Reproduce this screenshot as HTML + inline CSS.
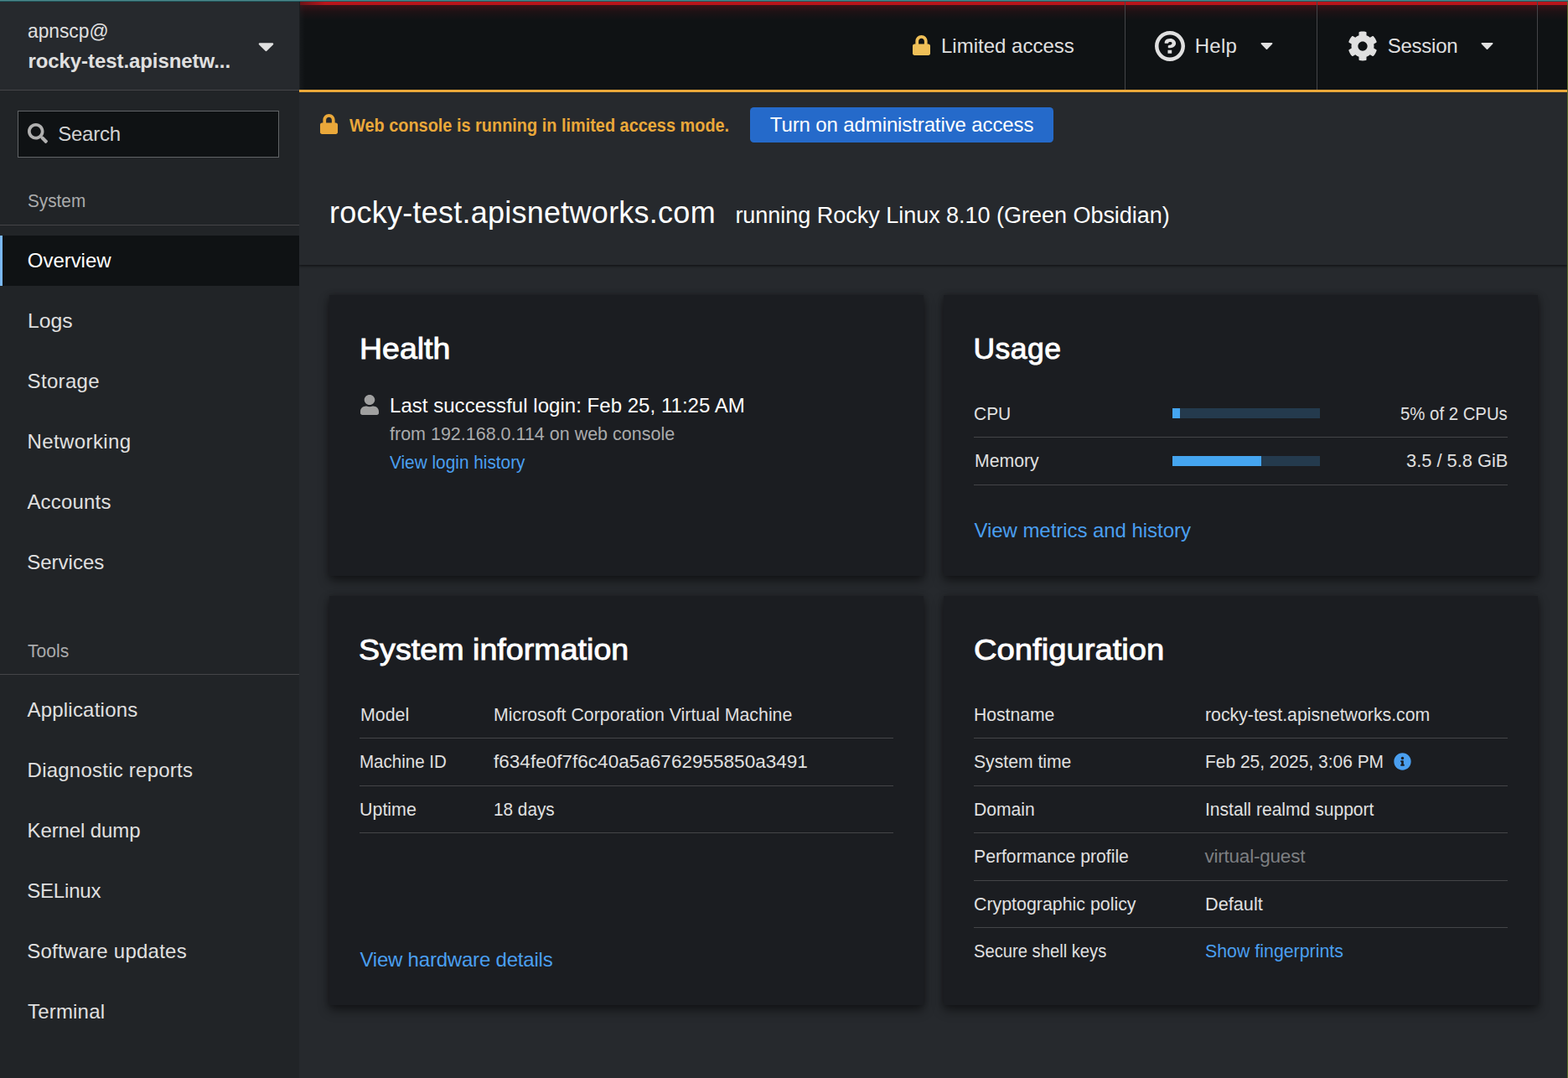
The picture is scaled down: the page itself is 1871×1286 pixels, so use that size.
<!DOCTYPE html>
<html lang="en">
<head>
<meta charset="utf-8">
<title>Overview - apnscp@rocky-test.apisnetworks.com</title>
<style>
*{box-sizing:border-box}
html,body{margin:0;padding:0}
body{width:1871px;height:1286px;overflow:hidden;background:#26292d;font-family:"Liberation Sans",Arial,sans-serif;position:relative;-webkit-font-smoothing:antialiased}
.t{position:absolute;transform-origin:0 0;white-space:pre;margin:0;padding:0;font-weight:400;text-decoration:none;display:block}
.b,.ic{position:absolute;display:block}
ul{list-style:none;margin:0;padding:0}
h1,h2,h3,p{margin:0}
.card{position:absolute;background:#1b1d21;box-shadow:0 6px 12px 0 rgba(3,3,3,.48),0 0 6px 0 rgba(3,3,3,.24)}
.btn{border:0;padding:0;margin:0;background:#256aca;border-radius:4.5px;font:inherit;text-align:left;overflow:visible;cursor:pointer}
.hr{position:absolute;height:1px;background:#444548}
</style>
</head>
<body>
<main>
<div class="b" style="left:357px;top:110px;width:1513px;height:206px;background:#26292d;box-shadow:0 1.5px 3px 0 rgba(3,3,3,.48),0 0 3px 0 rgba(3,3,3,.24);"></div>
<svg class="ic" style="left:382px;top:136px" width="21" height="24" viewBox="0 0 448 512" preserveAspectRatio="none" fill="#eaa83a" aria-hidden="true"><path d="M400 224h-24v-72C376 68.2 307.8 0 224 0S72 68.2 72 152v72H48c-26.5 0-48 21.5-48 48v192c0 26.5 21.5 48 48 48h352c26.5 0 48-21.5 48-48V272c0-26.5-21.5-48-48-48zm-104 0H152v-72c0-39.7 32.3-72 72-72s72 32.3 72 72v72z"/></svg>
<strong class="t" style="left:417.4px;top:138px;font-size:22.5px;line-height:23px;color:#eaa83a;transform:scaleX(0.8847);font-weight:700;">Web console is running in limited access mode.</strong>
<button type="button" class="b btn" style="left:895px;top:128px;width:362px;height:42px"><span class="t" style="left:23.8px;top:9px;font-size:24px;line-height:24px;color:#ffffff;letter-spacing:-0.118px;">Turn on administrative access</span></button>
<h1 class="t" style="left:393.0px;top:236px;font-size:36px;line-height:36px;color:#ffffff;letter-spacing:0.25px;">rocky-test.apisnetworks.com</h1>
<span class="t" style="left:877.4px;top:244px;font-size:27px;line-height:27px;color:#ffffff;letter-spacing:-0.022px;">running Rocky Linux 8.10 (Green Obsidian)</span>
<article class="card" style="left:393px;top:352px;width:709px;height:335px">
</article>
<h2 class="t" style="left:428.89px;top:398px;font-size:35.5px;line-height:36px;color:#ffffff;transform:scaleX(1.0556);-webkit-text-stroke:0.9px #ffffff;">Health</h2>
<svg class="ic" style="left:430px;top:471px" width="22" height="24" viewBox="0 0 448 512" preserveAspectRatio="none" fill="#a0a0a0" aria-hidden="true"><path d="M224 256c70.700 0 128-57.300 128-128S294.700 0 224 0 96 57.300 96 128s57.300 128 128 128zm89.600 32h-16.700c-22.200 10.200-46.900 16-72.900 16s-50.600-5.800-72.900-16h-16.700C60.200 288 0 348.200 0 422.400V464c0 26.500 21.500 48 48 48h352c26.500 0 48-21.500 48-48v-41.600c0-74.200-60.200-134.400-134.400-134.400z"/></svg>
<span class="t" style="left:465.0px;top:472px;font-size:24px;line-height:24px;color:#ffffff;letter-spacing:0.034px;">Last successful login: Feb 25, 11:25 AM</span>
<span class="t" style="left:465.4px;top:506px;font-size:22.5px;line-height:23px;color:#aaabac;transform:scaleX(0.9552);">from 192.168.0.114 on web console</span>
<a class="t" style="left:465.4px;top:540px;font-size:22.5px;line-height:23px;color:#4a9ff0;transform:scaleX(0.9246);">View login history</a>
<article class="card" style="left:1126px;top:352px;width:709px;height:335px"></article>
<h2 class="t" style="left:1161.4px;top:398px;font-size:35.5px;line-height:36px;color:#ffffff;letter-spacing:0.525px;-webkit-text-stroke:0.9px #ffffff;">Usage</h2>
<span class="t" style="left:1162.27px;top:482px;font-size:22.5px;line-height:23px;color:#e0e0e0;transform:scaleX(0.9311);">CPU</span>
<div class="b" style="left:1399px;top:487px;width:176px;height:12px;background:#243a4d;"><div class="b" style="left:0px;top:0px;width:9px;height:12px;background:#45a5f0;"></div></div>
<span class="t" style="left:1670.6px;top:482px;font-size:22.5px;line-height:23px;color:#e0e0e0;transform:scaleX(0.9043);">5% of 2 CPUs</span>
<div class="hr" style="left:1162px;top:521px;width:637px"></div>
<span class="t" style="left:1162.71px;top:538px;font-size:22.5px;line-height:23px;color:#e0e0e0;transform:scaleX(0.943);">Memory</span>
<div class="b" style="left:1399px;top:544px;width:176px;height:12px;background:#243a4d;"><div class="b" style="left:0px;top:0px;width:106px;height:12px;background:#45a5f0;"></div></div>
<span class="t" style="left:1677.83px;top:538px;font-size:22.5px;line-height:23px;color:#e0e0e0;transform:scaleX(0.9699);">3.5 / 5.8 GiB</span>
<div class="hr" style="left:1162px;top:578px;width:637px"></div>
<a class="t" style="left:1162.4px;top:621px;font-size:24px;line-height:24px;color:#4a9ff0;letter-spacing:-0.048px;">View metrics and history</a>
<article class="card" style="left:393px;top:711px;width:709px;height:488px"></article>
<h2 class="t" style="left:428.14px;top:757px;font-size:35.5px;line-height:36px;color:#ffffff;transform:scaleX(1.0608);-webkit-text-stroke:0.9px #ffffff;">System information</h2>
<span class="t" style="left:429.7px;top:841px;font-size:22.5px;line-height:23px;color:#e0e0e0;transform:scaleX(0.95);">Model</span>
<span class="t" style="left:589.1px;top:841px;font-size:22.5px;line-height:23px;color:#e0e0e0;transform:scaleX(0.9477);">Microsoft Corporation Virtual Machine</span>
<div class="hr" style="left:429px;top:880px;width:637px"></div>
<span class="t" style="left:429.37px;top:897px;font-size:22.5px;line-height:23px;color:#e0e0e0;transform:scaleX(0.9126);">Machine ID</span>
<span class="t" style="left:589.0px;top:897px;font-size:22.5px;line-height:23px;color:#e0e0e0;letter-spacing:0.023px;">f634fe0f7f6c40a5a6762955850a3491</span>
<div class="hr" style="left:429px;top:937px;width:637px"></div>
<span class="t" style="left:429.3px;top:954px;font-size:22.5px;line-height:23px;color:#e0e0e0;transform:scaleX(0.9522);">Uptime</span>
<span class="t" style="left:588.96px;top:954px;font-size:22.5px;line-height:23px;color:#e0e0e0;transform:scaleX(0.9224);">18 days</span>
<div class="hr" style="left:429px;top:993px;width:637px"></div>
<a class="t" style="left:429.4px;top:1133px;font-size:24px;line-height:24px;color:#4a9ff0;letter-spacing:-0.205px;">View hardware details</a>
<article class="card" style="left:1126px;top:711px;width:709px;height:488px"></article>
<h2 class="t" style="left:1161.52px;top:757px;font-size:35.5px;line-height:36px;color:#ffffff;transform:scaleX(1.0761);-webkit-text-stroke:0.9px #ffffff;">Configuration</h2>
<span class="t" style="left:1162.32px;top:841px;font-size:22.5px;line-height:23px;color:#e0e0e0;transform:scaleX(0.939);">Hostname</span>
<span class="t" style="left:1438.05px;top:841px;font-size:22.5px;line-height:23px;color:#e0e0e0;transform:scaleX(0.945);">rocky-test.apisnetworks.com</span>
<div class="hr" style="left:1162px;top:880px;width:637px"></div>
<span class="t" style="left:1161.86px;top:897px;font-size:22.5px;line-height:23px;color:#e0e0e0;transform:scaleX(0.9402);">System time</span>
<span class="t" style="left:1437.84px;top:897px;font-size:22.5px;line-height:23px;color:#e0e0e0;transform:scaleX(0.9307);">Feb 25, 2025, 3:06 PM</span>
<div class="hr" style="left:1162px;top:937px;width:637px"></div>
<span class="t" style="left:1162.33px;top:954px;font-size:22.5px;line-height:23px;color:#e0e0e0;transform:scaleX(0.9365);">Domain</span>
<span class="t" style="left:1437.63px;top:954px;font-size:22.5px;line-height:23px;color:#e0e0e0;transform:scaleX(0.9366);">Install realmd support</span>
<div class="hr" style="left:1162px;top:993px;width:637px"></div>
<span class="t" style="left:1162.32px;top:1010px;font-size:22.5px;line-height:23px;color:#e0e0e0;transform:scaleX(0.9418);">Performance profile</span>
<span class="t" style="left:1437.4px;top:1010px;font-size:22.5px;line-height:23px;color:#7d7f82;letter-spacing:-0.208px;">virtual-guest</span>
<div class="hr" style="left:1162px;top:1050px;width:637px"></div>
<span class="t" style="left:1161.85px;top:1067px;font-size:22.5px;line-height:23px;color:#e0e0e0;transform:scaleX(0.9493);">Cryptographic policy</span>
<span class="t" style="left:1438.27px;top:1067px;font-size:22.5px;line-height:23px;color:#e0e0e0;transform:scaleX(0.9652);">Default</span>
<div class="hr" style="left:1162px;top:1106px;width:637px"></div>
<span class="t" style="left:1161.9px;top:1123px;font-size:22.5px;line-height:23px;color:#e0e0e0;transform:scaleX(0.8977);">Secure shell keys</span>
<a class="t" style="left:1437.85px;top:1123px;font-size:22.5px;line-height:23px;color:#4a9ff0;transform:scaleX(0.9488);">Show fingerprints</a>
<svg class="ic" style="left:1663px;top:898px" width="21" height="21" viewBox="0 0 512 512" preserveAspectRatio="xMidYMid meet" fill="#4a9ff0" aria-hidden="true"><path d="M256 8C119.043 8 8 119.083 8 256c0 136.997 111.043 248 248 248s248-111.003 248-248C504 119.083 392.957 8 256 8zm0 110c23.196 0 42 18.804 42 42s-18.804 42-42 42-42-18.804-42-42 18.804-42 42-42zm56 254c0 6.627-5.373 12-12 12h-88c-6.627 0-12-5.373-12-12v-24c0-6.627 5.373-12 12-12h12v-64h-12c-6.627 0-12-5.373-12-12v-24c0-6.627 5.373-12 12-12h64c6.627 0 12 5.373 12 12v100h12c6.627 0 12 5.373 12 12v24z"/></svg>
</main>
<header>
<div class="b" style="left:357px;top:2px;width:1513px;height:105px;background:#0f1214;background-image:linear-gradient(to bottom,#b8151b 0,#b8151b 4px,#3a1318 4px,#1d1215 12px,#0f1214 22px);"></div>
<div class="b" style="left:357px;top:107px;width:1513px;height:3px;background:#eaa83a;"></div>
<div class="b" style="left:358px;top:2px;width:30px;height:4px;background:transparent;background-image:linear-gradient(to right,rgba(15,18,20,.45),rgba(15,18,20,0));"></div>
<div class="b" style="left:357px;top:2px;width:1px;height:105px;background:#1b1e21;"></div>
<div class="b" style="left:358px;top:6px;width:6px;height:101px;background:transparent;background-image:linear-gradient(to right,rgba(38,41,45,.28),rgba(38,41,45,0));"></div>
<div class="b" style="left:1342px;top:2px;width:1px;height:105px;background:#444548;"></div>
<div class="b" style="left:1571px;top:2px;width:1px;height:105px;background:#444548;"></div>
<div class="b" style="left:1834px;top:2px;width:1px;height:105px;background:#444548;"></div>
<svg class="ic" style="left:1088.5px;top:42px" width="21" height="24" viewBox="0 0 448 512" preserveAspectRatio="none" fill="#f0c058" aria-hidden="true"><path d="M400 224h-24v-72C376 68.2 307.8 0 224 0S72 68.2 72 152v72H48c-26.5 0-48 21.5-48 48v192c0 26.5 21.5 48 48 48h352c26.5 0 48-21.5 48-48V272c0-26.5-21.5-48-48-48zm-104 0H152v-72c0-39.7 32.3-72 72-72s72 32.3 72 72v72z"/></svg>
<span class="t" style="left:1123.0px;top:43px;font-size:24px;line-height:24px;color:#e0e0e0;">Limited access</span>
<svg class="ic" style="left:1378px;top:37px" width="36" height="36" viewBox="0 0 1024 1024" preserveAspectRatio="xMidYMid meet" fill="#e0e0e0" aria-hidden="true"><path d="M521.3,576 C627.5,576 713.7,502 713.7,413.7 C713.7,325.4 627.6,253.6 521.3,253.6 C366,253.6 334.5,337.7 329.2,407.2 C329.2,414.3 335.2,416 343.5,416 L445,416 C450.5,416 458,415.5 460.8,406.5 C460.8,362.6 582.9,357.1 582.9,413.6 C582.9,441.9 556.2,470.9 521.3,473 C486.4,475.1 447.3,479.8 447.3,521.7 L447.3,553.8 C447.3,570.8 456.1,576 472,576 C487.9,576 521.3,576 521.3,576 M575.3,751.3 L575.3,655.3 C575.3,651.7 574,649.9 570.3,649.9 L444.3,649.9 C440.7,649.9 439.8,652.1 439.8,655.3 L439.8,751.3 C439.8,756.3 441.9,758.1 444.3,758.1 L570.3,758.1 C573.7,758.1 575.3,755.2 575.3,751.3 M512,896 C300.2,896 128,723.9 128,512 C128,300.3 300.2,128 512,128 C723.8,128 896,300.2 896,512 C896,723.8 723.7,896 512,896 M512.1,0 C229.7,0 0,229.8 0,512 C0,794.2 229.8,1024 512.1,1024 C794.4,1024 1024,794.3 1024,512 C1024,229.7 794.4,0 512.1,0"/></svg>
<span class="t" style="left:1425.8px;top:43px;font-size:24px;line-height:24px;color:#e0e0e0;letter-spacing:0.2px;">Help</span>
<svg class="ic" style="left:1504px;top:42px" width="15" height="24" viewBox="0 0 320 512" preserveAspectRatio="none" fill="#e0e0e0" aria-hidden="true"><path d="M31.3 192h257.3c17.8 0 26.7 21.5 14.1 34.100L174.100 354.800c-7.800 7.800-20.500 7.800-28.300 0L17.200 226.100C4.600 213.500 13.500 192 31.300 192z"/></svg>
<svg class="ic" style="left:1608px;top:37px" width="36" height="36" viewBox="0 0 512 512" preserveAspectRatio="xMidYMid meet" fill="#e0e0e0" aria-hidden="true"><path d="M487.4 315.7l-42.600-24.600c4.300-23.200 4.300-47 0-70.200l42.600-24.600c4.900-2.800 7.100-8.600 5.500-14-11.100-35.600-30-67.800-54.700-94.600-3.800-4.100-10-5.100-14.800-2.300L380.800 110c-17.900-15.400-38.500-27.300-60.800-35.100V25.800c0-5.600-3.900-10.500-9.400-11.700-36.700-8.200-74.300-7.800-109.200 0-5.500 1.200-9.400 6.100-9.400 11.700V75c-22.200 7.900-42.800 19.800-60.800 35.100L88.700 85.500c-4.900-2.800-11-1.900-14.800 2.300-24.700 26.700-43.600 58.900-54.700 94.600-1.700 5.400.6 11.200 5.500 14L67.300 221c-4.300 23.200-4.300 47 0 70.200l-42.600 24.600c-4.900 2.800-7.100 8.600-5.500 14 11.100 35.600 30 67.800 54.700 94.600 3.800 4.100 10 5.100 14.800 2.300l42.600-24.600c17.900 15.400 38.500 27.300 60.800 35.100v49.200c0 5.600 3.900 10.500 9.400 11.700 36.700 8.200 74.300 7.800 109.200 0 5.500-1.200 9.400-6.100 9.400-11.700v-49.200c22.200-7.900 42.800-19.800 60.800-35.100l42.600 24.600c4.900 2.800 11 1.900 14.800-2.300 24.700-26.700 43.600-58.900 54.700-94.600 1.500-5.500-.7-11.300-5.600-14.100zM256 336c-44.100 0-80-35.900-80-80s35.900-80 80-80 80 35.900 80 80-35.900 80-80 80z"/></svg>
<span class="t" style="left:1655.7px;top:43px;font-size:24px;line-height:24px;color:#e0e0e0;letter-spacing:-0.25px;">Session</span>
<svg class="ic" style="left:1767px;top:42px" width="15" height="24" viewBox="0 0 320 512" preserveAspectRatio="none" fill="#e0e0e0" aria-hidden="true"><path d="M31.3 192h257.3c17.8 0 26.7 21.5 14.1 34.100L174.100 354.800c-7.800 7.800-20.500 7.800-28.300 0L17.200 226.100C4.600 213.500 13.500 192 31.300 192z"/></svg>
</header>
<nav>
<div class="b" style="left:0px;top:2px;width:357px;height:1284px;background:#212427;"></div>
<div class="b" style="left:0px;top:2px;width:357px;height:105px;background:#26292d;"></div>
<span class="t" style="left:32.65px;top:25px;font-size:24px;line-height:24px;color:#e0e0e0;transform:scaleX(0.9485);">apnscp@</span>
<span class="t" style="left:33.4px;top:61px;font-size:24px;line-height:24px;color:#e0e0e0;letter-spacing:-0.071px;font-weight:700;">rocky-test.apisnetw...</span>
<svg class="ic" style="left:308px;top:39.5px" width="19" height="30" viewBox="0 0 320 512" preserveAspectRatio="none" fill="#e0e0e0" aria-hidden="true"><path d="M31.3 192h257.3c17.8 0 26.7 21.5 14.1 34.100L174.100 354.800c-7.800 7.800-20.500 7.800-28.300 0L17.200 226.100C4.600 213.500 13.500 192 31.300 192z"/></svg>
<div class="b" style="left:0px;top:107px;width:357px;height:1px;background:#444548;"></div>
<div class="b" style="left:21px;top:132px;width:312px;height:56px;background:#0f1214;border:1px solid #616467;"></div>
<svg class="ic" style="left:33px;top:147px" width="24" height="24" viewBox="0 0 512 512" preserveAspectRatio="xMidYMid meet" fill="#b0b0b0" aria-hidden="true"><path d="M505 442.7L405.3 343c-4.500-4.500-10.600-7-17-7H372c27.600-35.300 44-79.700 44-128C416 93.100 322.900 0 208 0S0 93.100 0 208s93.100 208 208 208c48.300 0 92.700-16.400 128-44v16.300c0 6.400 2.500 12.500 7 17l99.700 99.700c9.400 9.400 24.600 9.400 33.900 0l28.300-28.300c9.400-9.400 9.400-24.600.1-34zM208 336c-70.700 0-128-57.200-128-128 0-70.700 57.200-128 128-128 70.700 0 128 57.200 128 128 0 70.700-57.200 128-128 128z"/></svg>
<span class="t" style="left:69.2px;top:148px;font-size:24px;line-height:24px;color:#d2d2d2;letter-spacing:-0.22px;">Search</span>
<h3 class="t" style="left:33.28px;top:228px;font-size:22.5px;line-height:23px;color:#aaabac;transform:scaleX(0.9219);">System</h3>
<div class="b" style="left:0px;top:268px;width:357px;height:1px;background:#444548;"></div>
<div class="b" style="left:0px;top:281px;width:357px;height:60px;background:#0f1214;border-left:3px solid #7ab8f5;"></div>
<ul>
<li><a class="t" style="left:32.8px;top:299px;font-size:24px;line-height:24px;color:#ffffff;letter-spacing:-0.043px;">Overview</a></li>
<li><a class="t" style="left:32.54px;top:371px;font-size:24px;line-height:24px;color:#e0e0e0;transform:scaleX(1.0306);">Logs</a></li>
<li><a class="t" style="left:32.6px;top:443px;font-size:24px;line-height:24px;color:#e0e0e0;letter-spacing:0.317px;">Storage</a></li>
<li><a class="t" style="left:32.6px;top:515px;font-size:24px;line-height:24px;color:#e0e0e0;letter-spacing:0.389px;">Networking</a></li>
<li><a class="t" style="left:32.4px;top:587px;font-size:24px;line-height:24px;color:#e0e0e0;letter-spacing:0.186px;">Accounts</a></li>
<li><a class="t" style="left:32.2px;top:659px;font-size:24px;line-height:24px;color:#e0e0e0;letter-spacing:0.014px;">Services</a></li>
</ul>
<h3 class="t" style="left:33.0px;top:765px;font-size:22.5px;line-height:23px;color:#aaabac;transform:scaleX(0.9365);">Tools</h3>
<div class="b" style="left:0px;top:804px;width:357px;height:1px;background:#444548;"></div>
<ul>
<li><a class="t" style="left:32.4px;top:835px;font-size:24px;line-height:24px;color:#e0e0e0;letter-spacing:0.227px;">Applications</a></li>
<li><a class="t" style="left:32.6px;top:907px;font-size:24px;line-height:24px;color:#e0e0e0;letter-spacing:0.229px;">Diagnostic reports</a></li>
<li><a class="t" style="left:32.6px;top:979px;font-size:24px;line-height:24px;color:#e0e0e0;letter-spacing:-0.11px;">Kernel dump</a></li>
<li><a class="t" style="left:32.2px;top:1051px;font-size:24px;line-height:24px;color:#e0e0e0;letter-spacing:-0.183px;">SELinux</a></li>
<li><a class="t" style="left:32.2px;top:1123px;font-size:24px;line-height:24px;color:#e0e0e0;letter-spacing:0.247px;">Software updates</a></li>
<li><a class="t" style="left:33.0px;top:1195px;font-size:24px;line-height:24px;color:#e0e0e0;letter-spacing:0.186px;">Terminal</a></li>
</ul>
</nav>
<div class="b" style="left:0px;top:0px;width:1871px;height:1px;background:#4d878a;"></div>
<div class="b" style="left:0px;top:1px;width:1871px;height:1px;background:#1f5a60;"></div>
<div class="b" style="left:1870px;top:2px;width:1px;height:1284px;background:#5a7028;"></div>
</body>
</html>
